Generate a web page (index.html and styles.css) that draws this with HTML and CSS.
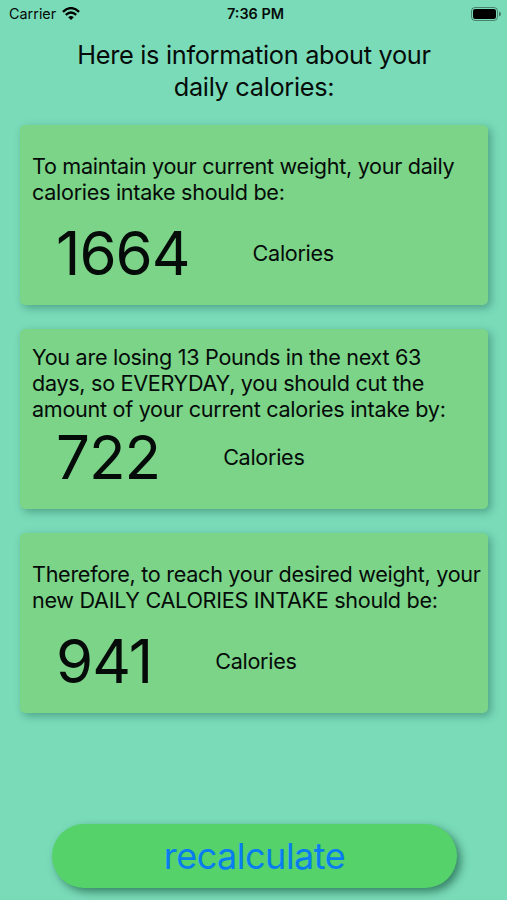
FILE: index.html
```html
<!DOCTYPE html>
<html lang="en">
<head>
<meta charset="utf-8">
<meta name="viewport" content="width=device-width, initial-scale=1">
<title>Daily calories</title>
<link rel="stylesheet" href="styles.css">
</head>
<body>
<header class="status">
  <div class="carrier"><span>Carrier</span>
    <svg class="wifi" viewBox="0 0 18 13" width="18" height="13" fill="none" stroke="#000" stroke-width="2.3"><path d="M.9 4.8Q9-2.6 17.1 4.8M3.8 7.8Q9 3.1 14.2 7.8"/><path d="M6.2 10.2Q9 7.8 11.8 10.2L9 13z" fill="#000" stroke="none"/></svg>
  </div>
  <time class="time">7:36 PM</time>
  <svg class="battery" viewBox="0 0 31 14" width="31" height="14"><rect x=".5" y=".5" width="26" height="13" rx="3.5" fill="none" stroke="#000" stroke-opacity=".4"/><rect x="2" y="2" width="23" height="10" rx="2.2"/><path d="M28 4.5q2 .8 2 2.5t-2 2.5z" fill-opacity=".45"/></svg>
</header>
<main>
  <h1><span>Here is information about your</span><br><span>daily calories:</span></h1>
  <section class="card">
    <p class="message"><span>To maintain your current weight, your daily</span><br><span>calories intake should be:</span></p>
    <div class="result"><strong class="value">1664</strong><span class="unit">Calories</span></div>
  </section>
  <section class="card">
    <p class="message"><span>You are losing 13 Pounds in the next 63</span><br><span>days, so EVERYDAY, you should cut the</span><br><span>amount of your current calories intake by:</span></p>
    <div class="result"><strong class="value">722</strong><span class="unit">Calories</span></div>
  </section>
  <section class="card">
    <p class="message"><span>Therefore, to reach your desired weight, your</span><br><span>new DAILY CALORIES INTAKE should be:</span></p>
    <div class="result"><strong class="value">941</strong><span class="unit">Calories</span></div>
  </section>
  <button class="recalculate" type="button">recalculate</button>
</main>
</body>
</html>
```
FILE: styles.css
```css
* { box-sizing: border-box; }
body { margin: 0; height: 900px; overflow: hidden; background: #7adbb9; color: #050b08; font-family: Inter, sans-serif; }
.status { display: grid; grid-template-columns: 1fr auto 1fr; align-items: center; height: 27px; padding: 0 5px 0 9px; font-size: 14.4px; }
.carrier { display: flex; align-items: center; gap: 6px; }
.time { font-weight: 600; }
.battery { justify-self: end; }
main { display: flex; flex-direction: column; height: 873px; padding: 12px 19px 12px 20px; }
h1 { margin: 0 0 22px; height: 64px; text-align: center; font-size: 25.3px; line-height: 32px; font-weight: 400; letter-spacing: -.3px; }
.card { height: 180px; flex: none; display: flex; flex-direction: column; margin-bottom: 24px; padding: 14px 12px 17px; border-radius: 5px; background: #7bd488; box-shadow: 3px 3px 8px rgba(25,95,75,.45); }
.message { display: flex; flex-direction: column; justify-content: center; height: 81px; margin: 0; font-size: 21.6px; line-height: 26px; letter-spacing: -.3px; white-space: nowrap; }
.message br { display: none; }
.result { display: flex; align-items: center; gap: 63px; height: 70px; padding-left: 24px; }
.value { font-size: 60px; line-height: 70px; font-weight: 400; letter-spacing: -1px; }
.unit { font-size: 21.6px; letter-spacing: -.3px; }
.recalculate { width: 405px; height: 64px; margin: auto 0 0 32px; border: 0; border-radius: 32px; background: #55d36a; box-shadow: 4px 4px 8px rgba(20,85,60,.65); color: #087cf0; font: 400 36px Inter, sans-serif; letter-spacing: -.5px; }
```
